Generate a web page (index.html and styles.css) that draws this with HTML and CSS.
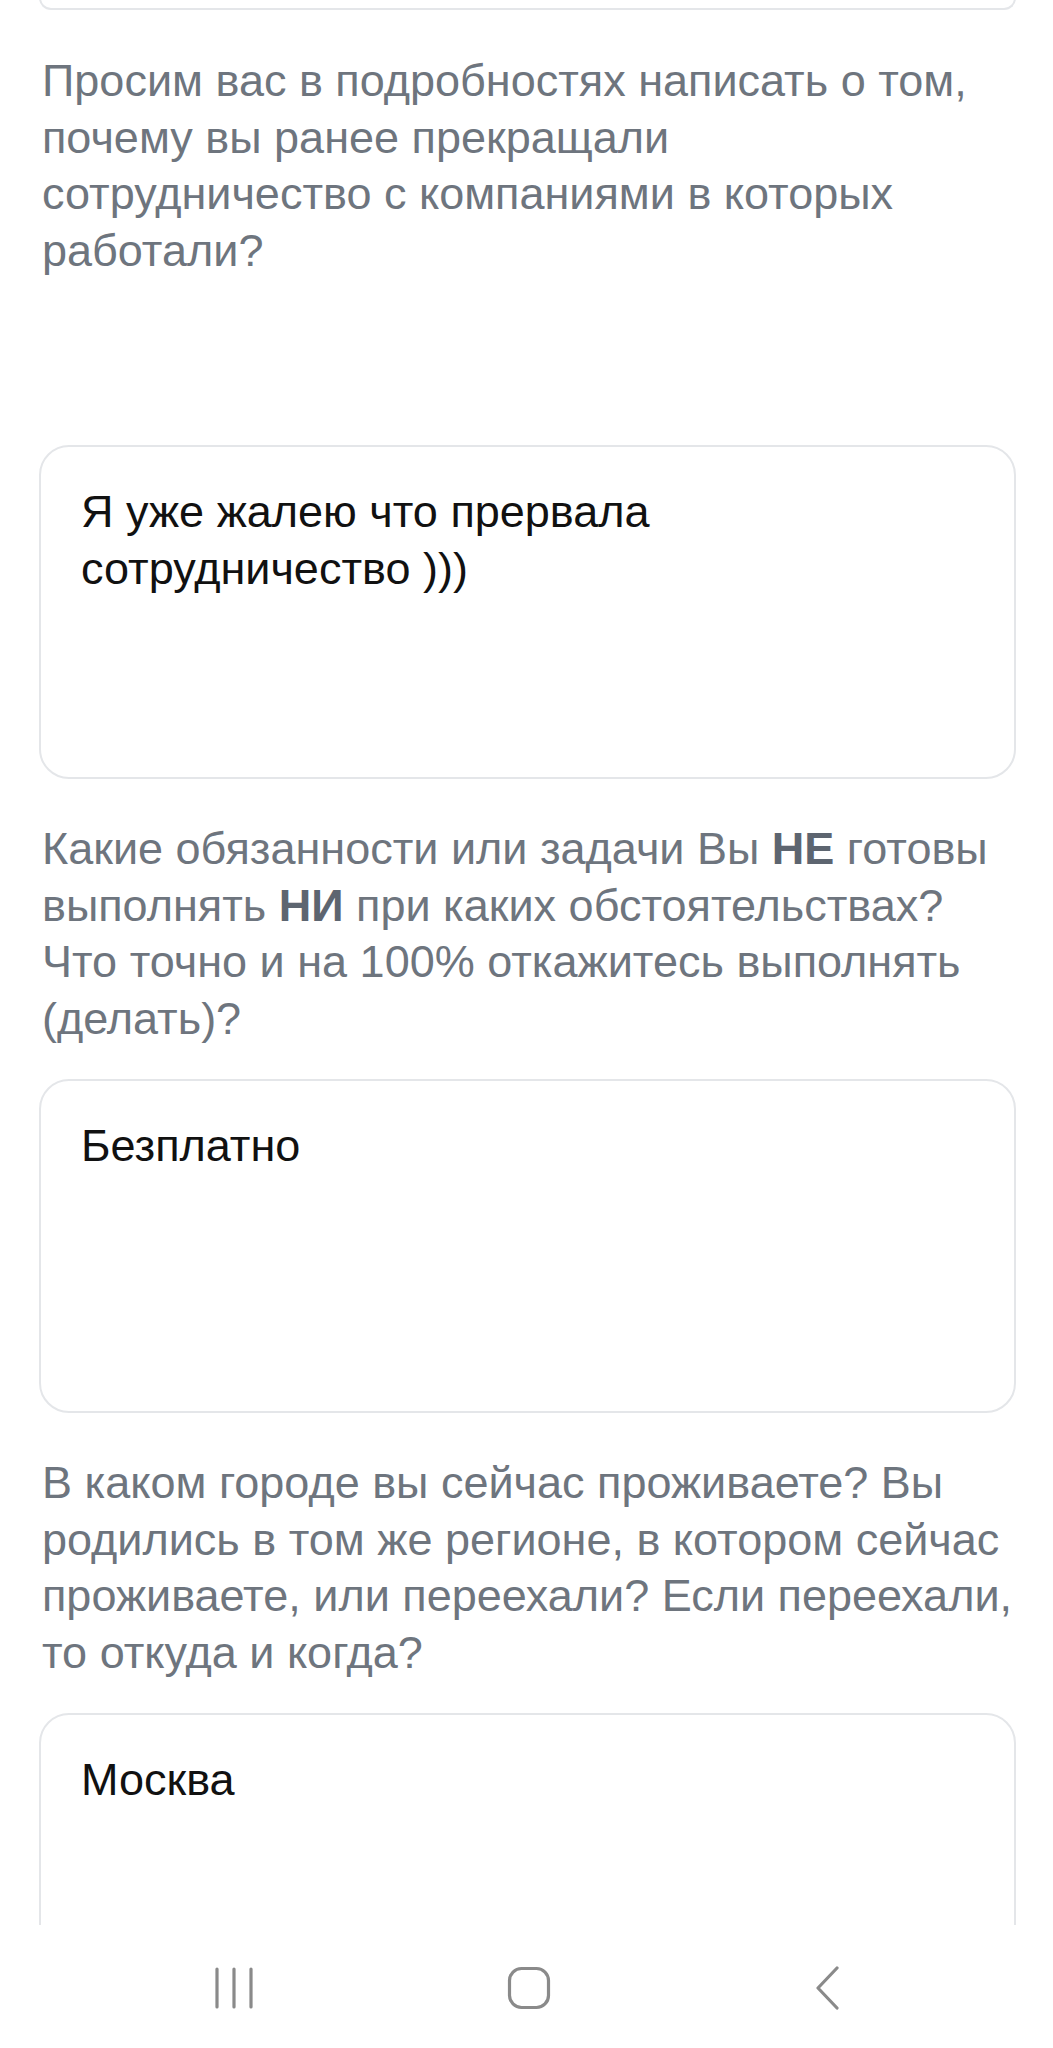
FILE: index.html
```html
<!DOCTYPE html>
<html lang="ru">
<head>
<meta charset="utf-8">
<title>Анкета</title>
<link rel="stylesheet" href="styles.css">
</head>
<body>
<div class="screen">
  <main class="content">
    <div class="card card--tail"></div>

    <p class="question question--spaced">Просим вас в подробностях написать о том,<br>почему вы ранее прекращали<br>сотрудничество с компаниями в которых<br>работали?</p>
    <div class="card"><p class="answer">Я уже жалею что прервала<br>сотрудничество )))</p></div>

    <p class="question">Какие обязанности или задачи Вы <b>НЕ</b> готовы<br>выполнять <b>НИ</b> при каких обстоятельствах?<br>Что точно и на 100% откажитесь выполнять<br>(делать)?</p>
    <div class="card"><p class="answer">Безплатно</p></div>

    <p class="question">В каком городе вы сейчас проживаете? Вы<br>родились в том же регионе, в котором сейчас<br>проживаете, или переехали? Если переехали,<br>то откуда и когда?</p>
    <div class="card"><p class="answer">Москва</p></div>
  </main>

  <nav class="navbar">
    <svg class="nav-icon" width="40" height="42" viewBox="0 0 40 42" aria-label="Недавние">
      <path d="M6 2v38M23 2v38M40 2v38" transform="translate(-3 0)" stroke="#8a8a8a" stroke-width="3.2" stroke-linecap="round" fill="none"/>
    </svg>
    <svg class="nav-icon" width="44" height="44" viewBox="0 0 44 44" aria-label="Главная">
      <rect x="2.5" y="2.5" width="39" height="39" rx="12" stroke="#8a8a8a" stroke-width="3.2" fill="none"/>
    </svg>
    <svg class="nav-icon" width="26" height="44" viewBox="0 0 26 44" aria-label="Назад">
      <path d="M23 2L4 22l19 20" stroke="#8a8a8a" stroke-width="3.2" stroke-linecap="round" stroke-linejoin="round" fill="none"/>
    </svg>
  </nav>
</div>
</body>
</html>
```

FILE: styles.css
```css
html, body {
  margin: 0;
  padding: 0;
  background: #ffffff;
}

.screen {
  width: 1053px;
  height: 2048px;
  display: flex;
  flex-direction: column;
  overflow: hidden;
  font-family: "Liberation Sans", Arial, sans-serif;
}

.content {
  height: 1925px;
  overflow: hidden;
  padding: 0 37px 0 39px;
  display: flex;
  flex-direction: column;
  flex-shrink: 0;
}

.card {
  border: 2px solid #e4e6e9;
  border-radius: 30px;
  background: #ffffff;
  height: 334px;
  box-sizing: border-box;
  padding: 37px 40px 0 40px;
  flex-shrink: 0;
}

.card--tail {
  height: 12px;
  margin-top: -2px;
  border-top: none;
  border-radius: 0 0 30px 30px;
  padding: 0;
}

.question {
  margin: 42px -30px 32px 3px;
  font-size: 45px;
  line-height: 56.5px;
  color: #6e757e;
  white-space: nowrap;
}

.question--spaced {
  margin-top: 43px;
  margin-bottom: 166px;
}

.question b {
  font-weight: 700;
  color: #5d6570;
}

.answer {
  margin: 0;
  font-size: 45px;
  line-height: 56.5px;
  color: #111111;
  white-space: nowrap;
}

.navbar {
  flex: 1;
  background: #ffffff;
  position: relative;
}

.nav-icon {
  position: absolute;
  top: 42px;
}

.nav-icon:nth-child(1) { left: 214px; }
.nav-icon:nth-child(2) { left: 507px; top: 41px; }
.nav-icon:nth-child(3) { left: 814px; top: 41px; }
```
